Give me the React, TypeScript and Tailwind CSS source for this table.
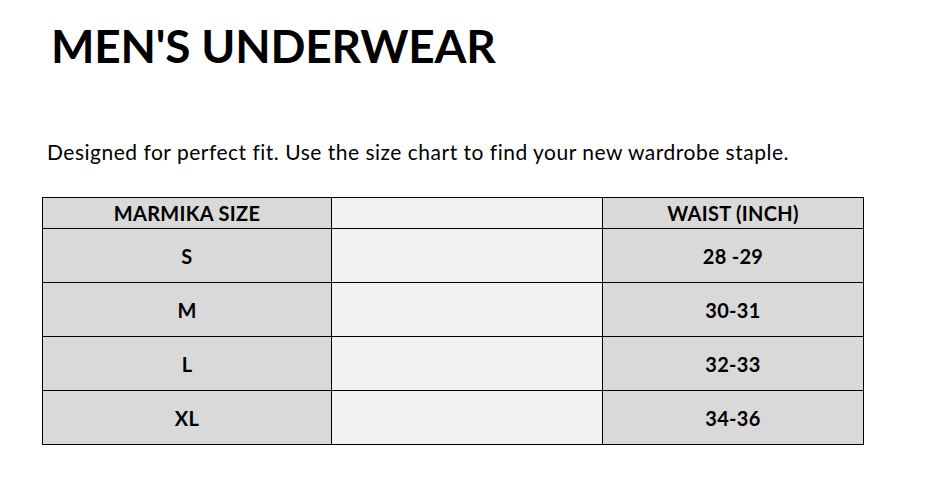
const rows = [
  { size: "S", waist: "28 -29" },
  { size: "M", waist: "30-31" },
  { size: "L", waist: "32-33" },
  { size: "XL", waist: "34-36" },
];

export default function App() {
  return (
    <div className="h-[499px] w-[925px] bg-white font-['Lato','Liberation_Sans',sans-serif] text-black">
      <h1 className="pl-[51px] pt-[18px] text-[46px] font-bold leading-[56px] tracking-[-0.2px]">
        MEN'S UNDERWEAR
      </h1>
      <p className="pl-[47px] pt-[65px] text-[21px] leading-[26px] tracking-[0.5px]">
        Designed for perfect fit. Use the size chart to find your new wardrobe staple.
      </p>
      <table className="ml-[42px] mt-[32px] w-[822px] border-collapse text-[20px] font-bold tracking-[0.3px]">
        <thead>
          <tr className="h-[31px]">
            <th className="w-[289px] border border-black bg-[#d9d9d9] p-0 font-bold">MARMIKA SIZE</th>
            <th className="w-[271px] border border-black bg-[#f2f2f2] p-0"></th>
            <th className="border border-black bg-[#d9d9d9] p-0 font-bold">WAIST (INCH)</th>
          </tr>
        </thead>
        <tbody>
          {rows.map((r) => (
            <tr key={r.size} className="h-[54px]">
              <td className="border border-black bg-[#d9d9d9] p-0 text-center">{r.size}</td>
              <td className="border border-black bg-[#f2f2f2] p-0"></td>
              <td className="border border-black bg-[#d9d9d9] p-0 text-center">{r.waist}</td>
            </tr>
          ))}
        </tbody>
      </table>
    </div>
  );
}
